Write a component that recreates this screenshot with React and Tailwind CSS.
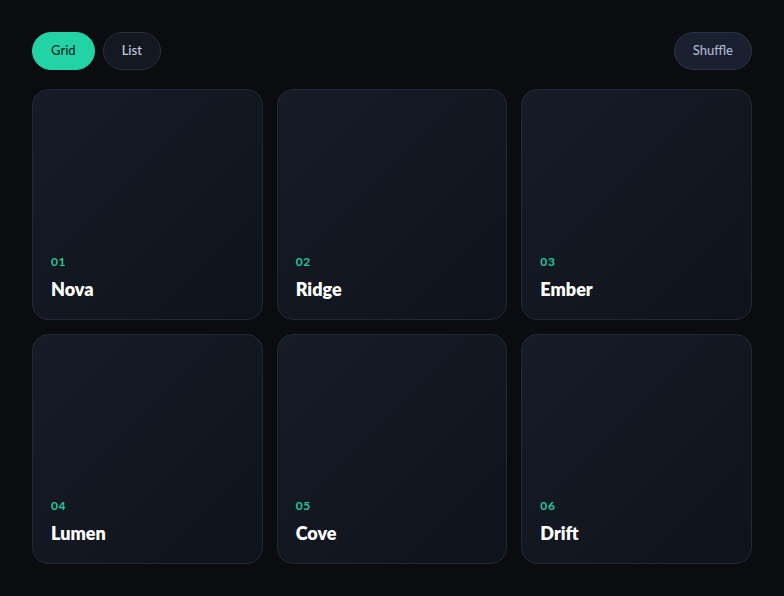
import React, { useState } from 'react'

const items = [
    { id: '01', name: 'Nova' },
    { id: '02', name: 'Ridge' },
    { id: '03', name: 'Ember' },
    { id: '04', name: 'Lumen' },
    { id: '05', name: 'Cove' },
    { id: '06', name: 'Drift' },
]

const App = () => {
    const [view, setView] = useState('grid')

    const pill = "h-[38px] px-[18px] rounded-full text-[13px] font-medium border"

    return (
        <div style={{ fontFamily: 'Lato, "Open Sans", sans-serif' }} className="min-h-[596px] w-full bg-[#0b0c10] p-8">
            <div className="flex items-center justify-between mb-[19px]">
                <div className="flex gap-2">
                    <button
                        onClick={() => setView('grid')}
                        className={pill + (view === 'grid' ? " bg-[#22d3a6] border-[#22d3a6] text-[#0a2a24]" : " bg-[#141821] border-[#2a303b] text-[#c4cce0]")}
                    >
                        Grid
                    </button>
                    <button
                        onClick={() => setView('list')}
                        className={pill + (view === 'list' ? " bg-[#22d3a6] border-[#22d3a6] text-[#0a2a24]" : " bg-[#141821] border-[#2a303b] text-[#c4cce0]")}
                    >
                        List
                    </button>
                </div>
                <button className={pill + " bg-[#1a2030] border-[#2a3243] text-[#a9b7cf]"}>
                    Shuffle
                </button>
            </div>

            <div className="grid grid-cols-3 gap-[14px]">
                {items.map(item => (
                    <div key={item.id} className="aspect-square rounded-2xl border border-[#222936] bg-gradient-to-br from-[#161b26] to-[#0f131b] px-[18px] pb-[16px] flex flex-col justify-end">
                        <div className="text-[12px] font-bold tracking-wider text-[#22c997] leading-4">{item.id}</div>
                        <div className="mt-[5px] text-[18px] font-extrabold text-white leading-7">{item.name}</div>
                    </div>
                ))}
            </div>
        </div>
    )
}

export default App
